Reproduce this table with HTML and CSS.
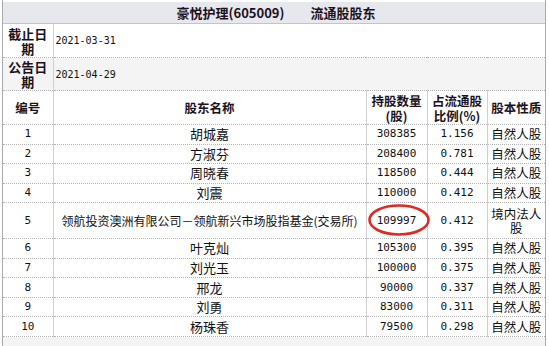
FILE: index.html
```html
<!DOCTYPE html>
<html lang="zh-CN">
<head>
<meta charset="utf-8">
<title>豪悦护理(605009) 流通股股东</title>
<link rel="stylesheet" href="styles.css">
</head>
<body>
<div class="frame">
  <table class="grid">
    <colgroup>
      <col class="c1"><col class="c2"><col class="c3"><col class="c4"><col class="c5">
    </colgroup>
    <tr class="title-row">
      <th colspan="5"><span>豪悦护理(605009)</span><span class="title-gap">流通股股东</span></th>
    </tr>
    <tr class="info">
      <th class="label">截止日期</th>
      <td colspan="4" class="date">2021-03-31</td>
    </tr>
    <tr class="info alt">
      <th class="label">公告日期</th>
      <td colspan="4" class="date">2021-04-29</td>
    </tr>
    <tr class="head">
      <th>编号</th>
      <th>股东名称</th>
      <th class="wrap">持股数量(股)</th>
      <th class="wrap">占流通股比例(%)</th>
      <th>股本性质</th>
    </tr>
    <tr class="row"><td class="num">1</td><td class="name">胡城嘉</td><td class="num">308385</td><td class="num">1.156</td><td class="kind">自然人股</td></tr>
    <tr class="row"><td class="num">2</td><td class="name">方淑芬</td><td class="num">208400</td><td class="num">0.781</td><td class="kind">自然人股</td></tr>
    <tr class="row"><td class="num">3</td><td class="name">周晓春</td><td class="num">118500</td><td class="num">0.444</td><td class="kind">自然人股</td></tr>
    <tr class="row"><td class="num">4</td><td class="name">刘震</td><td class="num">110000</td><td class="num">0.412</td><td class="kind">自然人股</td></tr>
    <tr class="row tall"><td class="num">5</td><td class="name long">领航投资澳洲有限公司－领航新兴市场股指基金(交易所)</td><td class="num"><span class="marked">109997<svg class="ring" viewBox="0 0 64 34" width="64" height="34"><ellipse cx="32" cy="17" rx="29.5" ry="14.5" fill="none" stroke="#dd2a22" stroke-width="2.6"/></svg></span></td><td class="num">0.412</td><td class="kind">境内法人股</td></tr>
    <tr class="row"><td class="num">6</td><td class="name">叶克灿</td><td class="num">105300</td><td class="num">0.395</td><td class="kind">自然人股</td></tr>
    <tr class="row"><td class="num">7</td><td class="name">刘光玉</td><td class="num">100000</td><td class="num">0.375</td><td class="kind">自然人股</td></tr>
    <tr class="row"><td class="num">8</td><td class="name">邢龙</td><td class="num">90000</td><td class="num">0.337</td><td class="kind">自然人股</td></tr>
    <tr class="row"><td class="num">9</td><td class="name">刘勇</td><td class="num">83000</td><td class="num">0.311</td><td class="kind">自然人股</td></tr>
    <tr class="row"><td class="num">10</td><td class="name">杨珠香</td><td class="num">79500</td><td class="num">0.298</td><td class="kind">自然人股</td></tr>
    <tr class="tail"><td colspan="5"></td></tr>
  </table>
</div>
</body>
</html>
```

FILE: styles.css
```css
html, body {
  margin: 0;
  padding: 0;
  background: #fff;
}

body {
  font-family: "Noto Sans CJK SC", "Noto Sans", sans-serif;
  color: #111;
}

.frame {
  margin-left: 2px;
  width: 542px;
  padding-top: 2px;
  border-left: 1px solid #a9a9b0;
  border-right: 1px solid #a9a9b0;
  height: 344px;
  overflow: hidden;
}

.grid {
  width: 542px;
  border-collapse: collapse;
  table-layout: fixed;
}

.c1 { width: 50px; }
.c2 { width: 313px; }
.c3 { width: 61px; }
.c4 { width: 60px; }
.c5 { width: 58px; }

.grid th,
.grid td {
  padding: 0;
  text-align: center;
  vertical-align: middle;
  border-top: 1px dotted #b4b4b4;
}

.grid th + th,
.grid th + td,
.grid td + td {
  border-left: 1px solid #cfcfd4;
}

.title-row th {
  height: 21px;
  background: #e7e7ee;
  border-top: none;
  border-bottom: 1px solid #c4c4c8;
  font-size: 13px;
  font-weight: 700;
  color: #1c121c;
  line-height: 21px;
  padding-left: 4px;
}

.title-gap {
  margin-left: 26px;
}

.title-row + .info th,
.title-row + .info td {
  border-top: none;
}

.info th,
.info td {
  height: 33px;
}

.info.alt th,
.info.alt td {
  background: #f4f4f4;
  height: 32px;
}

.label {
  font-size: 13px;
  font-weight: 700;
  line-height: 15px;
  color: #1c121c;
  padding: 0 4px;
}

.grid .date {
  text-align: left;
  padding-left: 2px;
  font-family: "DejaVu Sans Mono", "Liberation Mono", monospace;
  font-size: 10px;
  color: #111;
}

.head th {
  height: 33px;
  font-size: 12.5px;
  font-weight: 700;
  line-height: 15px;
  color: #1c121c;
}

.head .wrap {
  padding: 0 3px;
}

.row td {
  height: 18.6px;
  line-height: 14px;
}

.row.tall td {
  height: 34.7px;
}

.num {
  font-family: "DejaVu Sans Mono", "Liberation Mono", monospace;
  font-size: 11px;
  color: #111;
}

.name {
  font-size: 13px;
}

.name.long {
  font-size: 12px;
  white-space: nowrap;
}

.kind {
  font-size: 12.5px;
  line-height: 15px;
  padding: 0 3px;
}

.marked {
  position: relative;
  display: inline-block;
}

.ring {
  position: absolute;
  left: 50%;
  top: 50%;
  margin-left: -30px;
  margin-top: -18px;
  overflow: visible;
}

.tail td {
  height: 20px;
  background: #f4f4f4;
}
```
